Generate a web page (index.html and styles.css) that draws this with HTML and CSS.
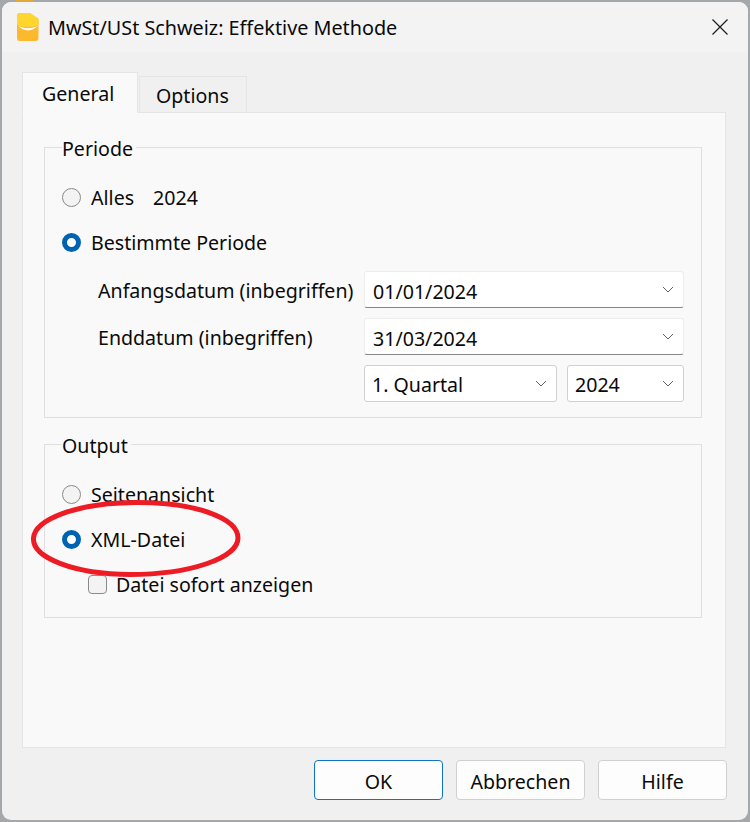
FILE: index.html
```html
<!DOCTYPE html>
<html lang="de">
<head>
  <meta charset="UTF-8">
  <title>MwSt/USt Schweiz: Effektive Methode</title>
  <link rel="stylesheet" href="styles.css">
</head>
<body>
  <!-- window behind the dialog, only its lowest edge shows -->
  <span class="behind-icon"></span>
  <div class="behind">IVA/IVA Svizzera: Metodo effettivo</div>

  <div class="dialog">
    <div class="titlebar">
      <svg class="app-icon" width="22" height="28" viewBox="0 0 22 28">
        <path d="M3 0H13L21.500 6V25a3 3 0 0 1-3 3H3a3 3 0 0 1-3-3V3a3 3 0 0 1 3-3Z" fill="#fdb92e"/>
        <path d="M3 0H13L21.500 6V12C15 14.500 7 14.500 0 12V3a3 3 0 0 1 3-3Z" fill="#ffd52e"/>
        <path d="M1 12.500C7.500 16 15 16 21 12.500C15 19 7 19 1 12.500Z" fill="#fff"/>
      </svg>
      <span class="title">MwSt/USt Schweiz: Effektive Methode</span>
      <svg class="close" width="16" height="16" viewBox="0 0 16 16">
        <path d="M0.500 0.500L15.500 15.500M15.500 0.500L0.500 15.500" stroke="#1a1a1a" stroke-width="1.200" fill="none"/>
      </svg>
    </div>

    <div class="content">
      <div class="tabs">
        <div class="tab active">General</div>
        <div class="tab">Options</div>
      </div>

      <div class="pane">
        <fieldset class="group period">
          <legend>Periode</legend>
          <div class="row radio-row first">
            <span class="radio"></span>
            <span>Alles</span>
            <span class="year">2024</span>
          </div>
          <div class="row radio-row">
            <span class="radio checked"></span>
            <span>Bestimmte Periode</span>
          </div>
          <div class="date-grid">
            <span class="date-label">Anfangsdatum (inbegriffen)</span>
            <div class="combo edit span2">01/01/2024<svg class="chev" width="12" height="7" viewBox="0 0 12 7"><path d="M1 1L6 6L11 1" stroke="#606060" fill="none"/></svg></div>
            <span class="date-label">Enddatum (inbegriffen)</span>
            <div class="combo edit span2">31/03/2024<svg class="chev" width="12" height="7" viewBox="0 0 12 7"><path d="M1 1L6 6L11 1" stroke="#606060" fill="none"/></svg></div>
            <span></span>
            <div class="combo">1. Quartal<svg class="chev" width="12" height="7" viewBox="0 0 12 7"><path d="M1 1L6 6L11 1" stroke="#606060" fill="none"/></svg></div>
            <div class="combo">2024<svg class="chev" width="12" height="7" viewBox="0 0 12 7"><path d="M1 1L6 6L11 1" stroke="#606060" fill="none"/></svg></div>
          </div>
        </fieldset>

        <fieldset class="group output">
          <legend>Output</legend>
          <div class="row radio-row first">
            <span class="radio"></span>
            <span>Seitenansicht</span>
          </div>
          <div class="row radio-row">
            <span class="radio checked"></span>
            <span>XML-Datei</span>
          </div>
          <div class="row check-row">
            <span class="check"></span>
            <span>Datei sofort anzeigen</span>
          </div>
        </fieldset>
      </div>

      <div class="buttons">
        <div class="btn default">OK</div>
        <div class="btn">Abbrechen</div>
        <div class="btn">Hilfe</div>
      </div>
    </div>
  </div>

  <!-- red marker drawn over the screenshot -->
  <svg class="marker" width="750" height="822" viewBox="0 0 750 822">
    <path d="M33.500 538C35 520 75 503 135 502.500C195 502 238 518 238 538C238 558 190 574.500 130 574.500C75 574 32 558 33.500 538Z" fill="none" stroke="#ed1c24" stroke-width="5"/>
  </svg>
</body>
</html>
```

FILE: styles.css
```css
* {
  box-sizing: border-box;
}

body {
  margin: 0;
  width: 750px;
  height: 822px;
  overflow: hidden;
  position: relative;
  background-color: #a5a8aa;
  font-family: "Noto Sans", "Open Sans", sans-serif;
  font-size: 19.600px;
  color: #0a0a0a;
}

.behind {
  position: absolute;
  top: -21px;
  left: 47px;
  font-size: 20px;
  color: #222;
}

.behind-icon {
  position: absolute;
  top: 0;
  left: 16px;
  width: 17px;
  height: 3px;
  background-color: #e0a93a;
}

.dialog {
  position: absolute;
  top: 2px;
  left: 2px;
  width: 746px;
  height: 818px;
  border-radius: 9px;
  overflow: hidden;
  background-color: #f0f0f0;
  display: flex;
  flex-direction: column;
}

.titlebar {
  height: 50px;
  flex: none;
  background-color: #f3f3f3;
  display: flex;
  align-items: center;
  padding: 0 20px 0 15px;
}

.app-icon {
  flex: none;
  margin-right: 9px;
}

.title {
  flex: 1;
  font-size: 19.800px;
  padding-top: 1px;
}

.content {
  flex: 1;
  display: flex;
  flex-direction: column;
  padding: 20px 20px 0;
}

.tabs {
  display: flex;
  align-items: flex-end;
  height: 41px;
  position: relative;
  z-index: 1;
  margin-bottom: -1px;
}

.tab {
  width: 108px;
  height: 37px;
  margin-left: 1px;
  padding-left: 16px;
  border: 1px solid #e5e5e5;
  line-height: 38px;
}

.tab.active {
  width: 116px;
  height: 41px;
  margin-left: 0;
  padding-left: 19px;
  background-color: #f9f9f9;
  border-bottom-color: #f9f9f9;
  line-height: 42px;
}

.pane {
  height: 636px;
  width: 704px;
  flex: none;
  background-color: #f9f9f9;
  border: 1px solid #e5e5e5;
  padding: 20px 23px 0 21px;
}

.group {
  margin: 0;
  padding: 0 17px;
  border: 1px solid #dfdfdf;
  min-width: 0;
}

.group legend {
  padding: 2px 3px 0 0;
  line-height: 27px;
}

.period {
  height: 285px;
  margin-bottom: 12px;
}

.output {
  height: 188px;
}

.row {
  display: flex;
  align-items: center;
}

.radio-row {
  height: 27px;
  margin-top: 18px;
  gap: 10px;
}

.radio-row.first {
  margin-top: 22px;
}

.year {
  margin-left: 9px;
}

.radio {
  width: 19px;
  height: 19px;
  flex: none;
  border-radius: 50%;
  border: 1px solid #8a8a8a;
  background-color: #f3f3f3;
}

.radio.checked {
  border: 5.500px solid #0063b1;
  background-color: #fff;
}

.date-grid {
  display: grid;
  grid-template-columns: 256px 193px 117px;
  column-gap: 10px;
  row-gap: 10px;
  margin: 15px 0 0 36px;
  width: 586px;
}

.date-label {
  align-self: center;
  padding-top: 2px;
}

.span2 {
  grid-column: span 2;
}

.combo {
  height: 37px;
  display: flex;
  align-items: center;
  justify-content: space-between;
  padding: 2px 9px 0 7px;
  background-color: #fff;
  border: 1px solid #d0d0d0;
  border-radius: 3px;
}

.chev {
  margin-top: -3px;
}

.combo.edit {
  padding: 3px 9px 0 8px;
  border-color: #ededed;
  border-bottom: 1px solid #868686;
}

.check-row {
  height: 27px;
  margin: 18px 0 0 26px;
  gap: 9px;
}

.check {
  width: 19px;
  height: 19px;
  flex: none;
  border: 1px solid #8a8a8a;
  border-radius: 4px;
  background-color: #f3f3f3;
}

.buttons {
  display: flex;
  justify-content: flex-end;
  gap: 13px;
  margin: 12px 1px 0 0;
}

.btn {
  width: 129px;
  height: 40px;
  display: flex;
  align-items: center;
  justify-content: center;
  padding-top: 2px;
  background-color: #fdfdfd;
  border: 1px solid #d0d0d0;
  border-radius: 4px;
}

.btn.default {
  border-color: #0f74c8;
}

.marker {
  position: absolute;
  top: 0;
  left: 0;
  pointer-events: none;
}
```
